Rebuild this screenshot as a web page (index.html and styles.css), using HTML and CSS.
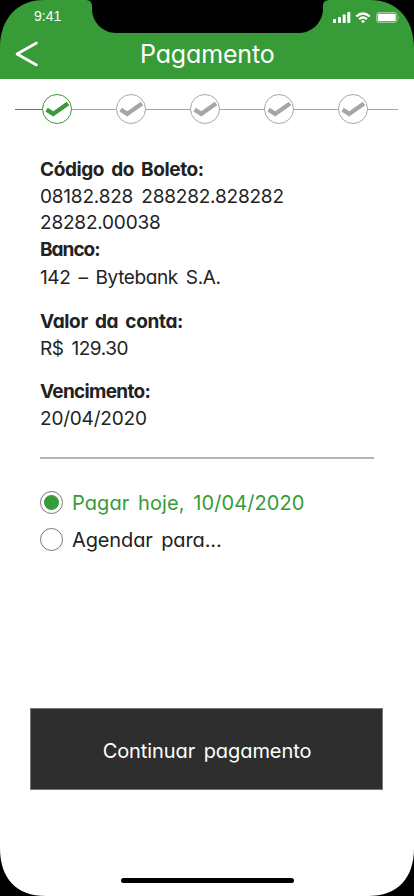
FILE: index.html
```html
<!DOCTYPE html>
<html lang="pt-BR">
<head>
<meta charset="utf-8">
<meta name="viewport" content="width=device-width, initial-scale=1">
<title>Pagamento</title>
<link rel="stylesheet" href="styles.css">
</head>
<body>
<svg class="symbols" aria-hidden="true">
  <symbol id="step" viewBox="0 0 30 30">
    <circle cx="15" cy="15" r="14.5" fill="#fff" stroke="currentColor"/>
    <path d="M4.600 15.600 11.200 19.900 26 9.400" fill="none" stroke="currentColor" stroke-width="4.300"/>
  </symbol>
</svg>
<main class="phone">
  <header class="header">
    <div class="status">
      <span class="time">9:41</span>
      <svg class="indicators" viewBox="0 0 68 14" fill="#fff">
        <rect x="0" y="8" width="3" height="4" rx=".7"/>
        <rect x="5" y="6" width="3" height="6" rx=".7"/>
        <rect x="9.7" y="3.5" width="3" height="8.5" rx=".7"/>
        <rect x="14.3" y="1" width="3" height="11" rx=".7"/>
        <path d="M22.5 4.7Q30 -2.2 37.500 4.700L35.900 6.300Q30 1 24.100 6.300ZM25.300 7.500Q30 3.200 34.700 7.500L33.100 9.100Q30 6.400 26.900 9.100ZM27.900 10.100Q30 8.500 32.100 10.100L30 12.200Z"/>
        <rect x="43.500" y="1.500" width="20.500" height="10" rx="2.500" fill="none" stroke="#fff" stroke-opacity=".45"/>
        <rect x="44.700" y="2.700" width="18" height="7.600" rx="1"/>
        <path d="M65.500 4.800q1.600 1.700 0 3.400Z" opacity=".5"/>
      </svg>
    </div>
    <div class="titlebar">
      <svg class="back" viewBox="0 0 24 26"><path d="M21.500 2 2 13 21.500 24" fill="none" stroke="#fff" stroke-width="2.600" stroke-linecap="round" stroke-linejoin="round"/></svg>
      <h1 class="title">Pagamento</h1>
    </div>
    <svg class="notch" viewBox="0 0 414 60">
      <path d="M85 0C90 0 92 2 92 6V9C92 22 103 33 116 33H299C312 33 323 22 323 9V6C323 2 325 0 330 0Z"/>
      <path d="M0 0H44C18 0 0 18 0 48ZM414 0H370C396 0 414 18 414 48Z"/>
    </svg>
  </header>
  <div class="steps">
    <i class="line done"></i>
    <svg class="step done"><use href="#step"/></svg><i class="line"></i>
    <svg class="step"><use href="#step"/></svg><i class="line"></i>
    <svg class="step"><use href="#step"/></svg><i class="line"></i>
    <svg class="step"><use href="#step"/></svg><i class="line"></i>
    <svg class="step"><use href="#step"/></svg><i class="line"></i>
  </div>
  <section class="details">
    <h2 class="label code-label">Código do Boleto:</h2>
    <p class="value code">08182.828 288282.828282<br>28282.00038</p>
    <h2 class="label bank-label">Banco:</h2>
    <p class="value bank">142 – Bytebank S.A.</p>
    <h2 class="label amount-label">Valor da conta:</h2>
    <p class="value amount">R$ 129.30</p>
    <h2 class="label due-label">Vencimento:</h2>
    <p class="value due">20/04/2020</p>
  </section>
  <section class="options">
    <div class="option selected"><span class="radio"></span><span class="today">Pagar hoje, 10/04/2020</span></div>
    <div class="option"><span class="radio"></span><span class="later">Agendar para...</span></div>
  </section>
  <button class="continue">Continuar pagamento</button>
  <svg class="frame" viewBox="0 0 414 60"><path d="M0 12C0 42 16 60 46 60H0ZM414 12C414 42 398 60 368 60H414Z"/></svg>
  <div class="home"></div>
</main>
</body>
</html>
```
FILE: styles.css
```css
* { box-sizing: border-box; margin: 0; padding: 0; }
body {
  background: #fff;
  color: #222;
  font-family: Inter, "Liberation Sans", sans-serif;
  font-feature-settings: "cv11" 1, "calt" 0;
  word-spacing: 3px;
}
.symbols { position: absolute; width: 0; height: 0; }
.phone { position: relative; width: 414px; height: 896px; overflow: hidden; }
.header { position: relative; height: 79px; background: #379b37; color: #fff; }
.status { display: flex; justify-content: space-between; height: 33px; padding: 8px 12px 0 34px; }
.time { font: 14px/17px "Liberation Sans", sans-serif; }
.indicators { width: 68px; height: 14px; margin: 3px 1px 0 0; }
.titlebar { display: flex; align-items: center; height: 42px; padding-left: 15px; }
.back { width: 24px; height: 26px; }
.title { margin-left: 101px; font-size: 25px; line-height: 32px; font-weight: 400; letter-spacing: -.15px; white-space: nowrap; }
.notch { position: absolute; left: 0; top: 0; width: 414px; height: 60px; }
.steps { display: flex; align-items: center; height: 30px; margin: 15px 16px 0 15px; color: #a6a6a6; }
.step { flex: none; width: 30px; height: 30px; }
.line { flex: none; width: 44px; height: 1px; background: #a6a6a6; }
.line.done { width: 27px; background: #379b37; }
.line:last-child { width: 30px; }
.step.done { color: #379b37; }
.details { height: 302px; margin: 33px 40px 0; border-bottom: 2px solid #b5b5b5; white-space: nowrap; }
.label { height: 27px; font-size: 19px; line-height: 26px; font-weight: 700; letter-spacing: -.4px; }
.value { font-size: 19px; line-height: 26px; letter-spacing: -.2px; }
.bank-label { height: 28px; margin-top: 1px; letter-spacing: -1px; }
.bank { letter-spacing: -.38px; }
.amount-label { margin-top: 18px; letter-spacing: -.35px; }
.amount { letter-spacing: -.45px; }
.due-label { margin-top: 17px; letter-spacing: -.7px; }
.options { margin: 32px 40px 0; }
.option { display: flex; align-items: center; gap: 9px; height: 23px; font-size: 20px; margin-bottom: 14px; white-space: nowrap; }
.radio { width: 23px; height: 23px; border: 1px solid #777; border-radius: 50%; }
.today { letter-spacing: .08px; }
.later { letter-spacing: -.12px; }
.selected { color: #379b37; }
.selected .radio { padding: 3px; background: #379b37 content-box; }
.continue { display: block; width: 353px; height: 82px; margin: 157px 0 0 30px; padding: 3px 0 0 1px; background: #2e2e2e; border: 1px solid #777; color: #fff; font: inherit; font-size: 20px; font-feature-settings: inherit; word-spacing: 3px; letter-spacing: -.08px; }
.frame { position: absolute; left: 0; bottom: 0; width: 414px; height: 60px; }
.home { position: absolute; left: 121px; top: 878px; width: 173px; height: 5px; border-radius: 3px; background: #000; }
```
